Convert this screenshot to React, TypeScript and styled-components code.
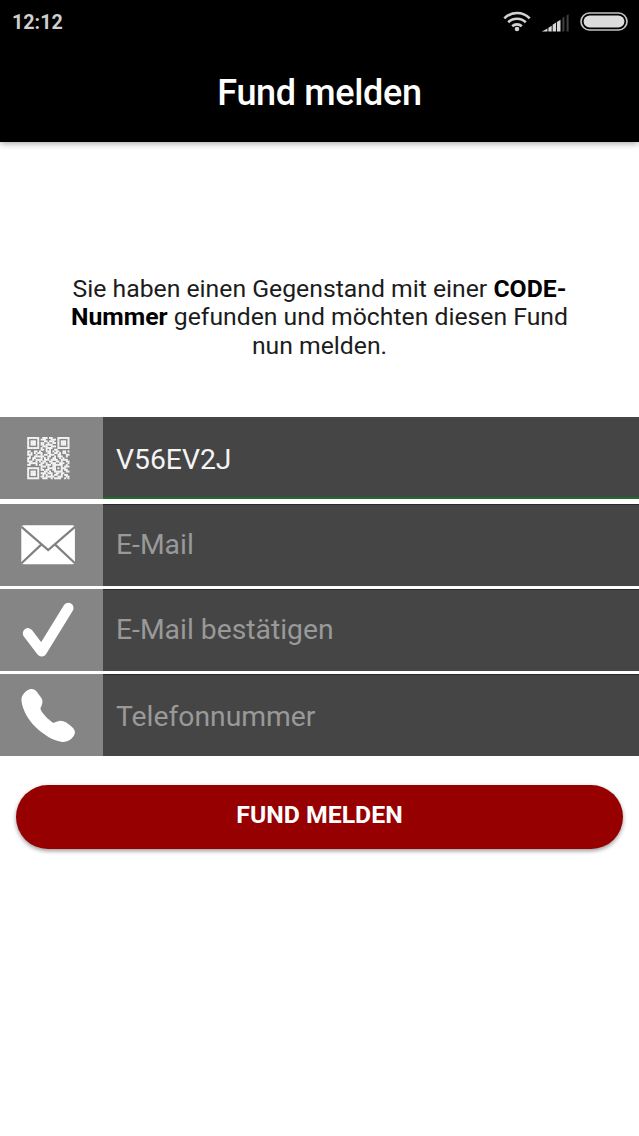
import React from "react";
import styled, { createGlobalStyle } from "styled-components";

const GlobalStyle = createGlobalStyle`
  * { box-sizing: border-box; }
  body { margin: 0; background: #fff; font-family: Roboto, "Liberation Sans", sans-serif; }
`;

const Screen = styled.div`
  min-height: 1136px;
  background: #fff;
  display: flex;
  flex-direction: column;
`;

const Header = styled.header`
  height: 142px;
  background: #000;
  box-shadow: 0 1px 7px rgba(0, 0, 0, 0.4);
  display: flex;
  flex-direction: column;
`;

const StatusBar = styled.div`
  height: 44px;
  padding: 0 11px 0 12px;
  display: flex;
  align-items: center;
  justify-content: space-between;
`;

const Clock = styled.span`
  padding-top: 2px;
  color: #cfcfcf;
  font-size: 19.7px;
  font-weight: 700;
  line-height: 24px;
`;

const StatusIcons = styled.div`
  display: flex;
  align-items: center;
  svg { display: block; }
`;

const SignalSlot = styled.div`
  margin: 3px 11px 0 9px;
`;

const Title = styled.h1`
  margin: 0;
  height: 98px;
  display: flex;
  align-items: center;
  justify-content: center;
  color: #fff;
  font-size: 36px;
  font-weight: 500;
  letter-spacing: -0.35px;
`;

const Intro = styled.p`
  margin: 132px 0 57px;
  height: 86px;
  padding-top: 1px;
  color: #1c1c1c;
  font-size: 24.75px;
  line-height: 28.4px;
  text-align: center;
  white-space: nowrap;
  b { color: #000; font-weight: 700; }
`;

const Form = styled.div`
  display: flex;
  flex-direction: column;
  gap: 3px;
`;

const Row = styled.div<{ $active?: boolean }>`
  height: 82px;
  margin-bottom: ${(p) => (p.$active ? 2 : 0)}px;
  display: flex;
`;

const IconCell = styled.div`
  width: 103px;
  background: #858585;
  svg { display: block; }
`;

const Field = styled.div<{ $active?: boolean; $lift?: number }>`
  flex: 1;
  padding: 2px 13px ${(p) => p.$lift ?? 0}px;
  display: flex;
  align-items: center;
  background: #454545;
  color: ${(p) => (p.$active ? "#f4f4f4" : "#999")};
  font-size: 28.3px;
  box-shadow: ${(p) => (p.$active ? "inset 0 -2px 0 #1f6b2a" : "inset 0 1px 0 #2a2a2a")};
`;

const Submit = styled.button`
  margin: 29px 16px 0;
  height: 64px;
  padding: 0 0 5px;
  border: 0;
  border-radius: 32px;
  background: #960000;
  color: #fff;
  font-family: inherit;
  font-size: 24.8px;
  font-weight: 700;
  box-shadow: 0 2px 4px rgba(0, 0, 0, 0.4);
`;

const WifiIcon = () => (
  <svg width="30" height="24" viewBox="0 0 30 24" fill="none" stroke="#d2d2d2" strokeWidth="2.6">
    <path d="M2.3 8.3a18 18 0 0 1 25.4 0M6.2 12.3a12.6 12.6 0 0 1 17.6 0M10.2 16.3a7 7 0 0 1 9.6 0" />
    <circle cx="15" cy="19" r="2.3" fill="#d2d2d2" stroke="none" />
  </svg>
);

const SignalIcon = () => (
  <svg width="28" height="20" viewBox="0 0 28 20">
    <path d="M.8 17.6 6.5 14.4v3.2zM7.4 13.8l3.3-2v5.8H7.4zM11.6 10.8l3.4-2.2v9h-3.4zM15.9 8l3.6-2.3v11.9h-3.6z" fill="#d8d8d8" />
    <path d="M21.4 4l2-1.4v15h-2zM25.6 1.4l2-1.3v17.5h-2z" fill="#404040" />
  </svg>
);

const BatteryIcon = () => (
  <svg width="48" height="20" viewBox="0 0 48 20">
    <rect x="1" y="1" width="46" height="17" rx="8.5" fill="none" stroke="#c4c4c4" strokeWidth="1.7" />
    <rect x="3.6" y="3.4" width="40.8" height="12.2" rx="6.1" fill="#dcdcdc" />
  </svg>
);

const QR_MODULES = [
  "1111111001110110001111111",
  "1000001011100011101000001",
  "1011101000110111001011101",
  "1011101011001001101011101",
  "1011101011011110001011101",
  "1000001001110011101000001",
  "1111111010011110001111111",
  "0000000011010100110000000",
  "1100110100011101011001101",
  "1010101110001100110101100",
  "1110010010110111001100011",
  "0100111111001100101110010",
  "1101100010101001100101000",
  "1001011110111011110011110",
  "1110010101100110011010011",
  "0111110011010011100111001",
  "1100010110011101111110010",
  "0000000011101001100010111",
  "1111111010001111101011100",
  "1000001011011001100010110",
  "1011101000110100111110011",
  "1011101011101110011011000",
  "1011101001010010110010110",
  "1000001011011111001110011",
  "1111111001110010111100101",
];

const QrIcon = () => (
  <svg width="103" height="82" viewBox="0 0 103 82">
    <g transform="translate(27.2 20) scale(1.68)" fill="#f6f6f6">
      {QR_MODULES.map((line, y) =>
        Array.from(line).map((m, x) =>
          m === "1" ? <rect key={`${x}-${y}`} x={x} y={y} width="1.15" height="1.15" /> : null
        )
      )}
    </g>
  </svg>
);

const MailIcon = () => (
  <svg width="103" height="82" viewBox="0 0 103 82">
    <rect x="21.3" y="21.3" width="53.6" height="39" rx="2.5" fill="#fff" />
    <path
      d="M21.5 22.8 48.2 46 75 22.8M21.5 59.2 41.2 40.6M75 59.2 55.2 40.6"
      fill="none"
      stroke="#808080"
      strokeWidth="2.2"
    />
  </svg>
);

const CheckIcon = () => (
  <svg width="103" height="82" viewBox="0 0 103 82">
    <path
      d="M28 44.3 41.7 62.3 68.3 19"
      fill="none"
      stroke="#fff"
      strokeWidth="10.4"
      strokeLinecap="round"
      strokeLinejoin="round"
    />
  </svg>
);

const PhoneIcon = () => (
  <svg width="103" height="82" viewBox="0 0 103 82">
    <path
      d="M21.5 27C21 22.5 23.5 19 27.5 16.3C31 14 34.5 14.7 36.8 17.8L41 23.6C43.5 27 42.5 30 40.4 34.6C41 38 46 43.5 52.5 48.6C54.5 49.5 57 46.9 60 46.7C64.5 46.6 69 50 72.5 53.5C75.5 56.5 75.6 59 73.5 62.2C70.5 66.5 66 68.6 61 67.7C53 66.5 44 61 35.5 53C27.5 45 22.5 35.5 21.5 27Z"
      fill="#fff"
    />
  </svg>
);

const FIELDS = [
  { text: "V56EV2J", Icon: QrIcon, active: true },
  { text: "E-Mail", Icon: MailIcon, lift: 4 },
  { text: "E-Mail bestätigen", Icon: CheckIcon, lift: 4 },
  { text: "Telefonnummer", Icon: PhoneIcon },
];

export default function App() {
  return (
    <Screen>
      <GlobalStyle />
      <Header>
        <StatusBar>
          <Clock>12:12</Clock>
          <StatusIcons>
            <WifiIcon />
            <SignalSlot>
              <SignalIcon />
            </SignalSlot>
            <BatteryIcon />
          </StatusIcons>
        </StatusBar>
        <Title>Fund melden</Title>
      </Header>
      <Intro>
        Sie haben einen Gegenstand mit einer <b>CODE-</b>
        <br />
        <b>Nummer</b> gefunden und möchten diesen Fund
        <br />
        nun melden.
      </Intro>
      <Form>
        {FIELDS.map(({ text, Icon, active, lift }) => (
          <Row key={text} $active={active}>
            <IconCell>
              <Icon />
            </IconCell>
            <Field $active={active} $lift={lift}>
              {text}
            </Field>
          </Row>
        ))}
      </Form>
      <Submit>FUND MELDEN</Submit>
    </Screen>
  );
}
